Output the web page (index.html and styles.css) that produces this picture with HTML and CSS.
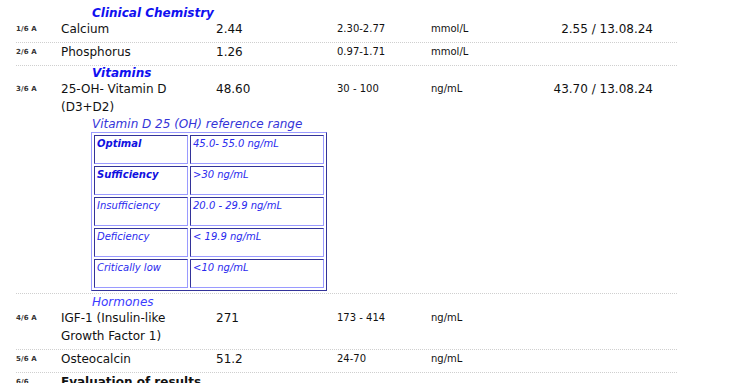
FILE: index.html
```html
<!DOCTYPE html>
<html>
<head>
<meta charset="utf-8">
<link rel="stylesheet" href="styles.css">
</head>
<body>
<div class="page">
  <div class="heading bold">Clinical Chemistry</div>
  <div class="row">
    <div class="line">
      <span class="code">1/6 A</span>
      <span class="name">Calcium</span>
      <span class="value">2.44</span>
      <span class="range">2.30-2.77</span>
      <span class="unit">mmol/L</span>
      <span class="prev">2.55 / 13.08.24</span>
    </div>
  </div>
  <div class="row">
    <div class="line">
      <span class="code">2/6 A</span>
      <span class="name">Phosphorus</span>
      <span class="value">1.26</span>
      <span class="range">0.97-1.71</span>
      <span class="unit">mmol/L</span>
      <span class="prev"></span>
    </div>
  </div>
  <div class="heading bold">Vitamins</div>
  <div class="row tight">
    <div class="line">
      <span class="code">3/6 A</span>
      <span class="name">25-OH- Vitamin D (D3+D2)</span>
      <span class="value">48.60</span>
      <span class="range">30 - 100</span>
      <span class="unit">ng/mL</span>
      <span class="prev">43.70 / 13.08.24</span>
    </div>
    <div class="refbox">
      <div class="caption">Vitamin D 25 (OH) reference range</div>
      <table class="reftable">
        <tr><td class="c1 strong">Optimal</td><td class="c2">45.0- 55.0 ng/mL</td></tr>
        <tr><td class="c1 strong">Sufficiency</td><td class="c2">&gt;30 ng/mL</td></tr>
        <tr><td class="c1">Insufficiency</td><td class="c2">20.0 - 29.9 ng/mL</td></tr>
        <tr><td class="c1">Deficiency</td><td class="c2">&lt; 19.9 ng/mL</td></tr>
        <tr><td class="c1">Critically low</td><td class="c2">&lt;10 ng/mL</td></tr>
      </table>
    </div>
  </div>
  <div class="heading light">Hormones</div>
  <div class="row">
    <div class="line">
      <span class="code">4/6 A</span>
      <span class="name">IGF-1 (Insulin-like Growth Factor 1)</span>
      <span class="value">271</span>
      <span class="range">173 - 414</span>
      <span class="unit">ng/mL</span>
      <span class="prev"></span>
    </div>
  </div>
  <div class="row">
    <div class="line">
      <span class="code">5/6 A</span>
      <span class="name">Osteocalcin</span>
      <span class="value">51.2</span>
      <span class="range">24-70</span>
      <span class="unit">ng/mL</span>
      <span class="prev"></span>
    </div>
  </div>
  <div class="row plain">
    <div class="line">
      <span class="code">6/6</span>
      <span class="name eval">Evaluation of results</span>
    </div>
  </div>
</div>
</body>
</html>
```

FILE: styles.css
```css
html, body {
  margin: 0;
  padding: 0;
  background: #ffffff;
}
body {
  font-family: "DejaVu Sans", Verdana, sans-serif;
  color: #111111;
  overflow: hidden;
}
.page {
  width: 661px;
  margin-left: 16px;
  padding-top: 6px;
}
.heading {
  padding-left: 76px;
  font-size: 12px;
  line-height: 14px;
  font-style: italic;
}
.heading.bold {
  font-weight: bold;
  color: #1010f0;
}
.heading.light {
  color: #3b3bff;
  margin-top: 1px;
}
.row {
  border-bottom: 1px dotted #cfcfcf;
  padding-bottom: 4px;
}
.row.tight {
  padding-bottom: 2px;
}
.row.plain {
  border-bottom: none;
}
.line {
  display: grid;
  grid-template-columns: 45px 155px 121px 94px 1fr 180px 24px;
  align-items: start;
  line-height: 18px;
}
.code {
  font-size: 7px;
  color: #333333;
  font-weight: bold;
  letter-spacing: 0.1px;
}
.name {
  font-size: 12px;
  padding-right: 4px;
}
.name.eval {
  font-weight: bold;
  grid-column: 2 / 5;
}
.value {
  font-size: 12px;
}
.range, .unit {
  font-size: 10px;
}
.prev {
  font-size: 12px;
  text-align: right;
}
.refbox {
  margin-left: 75px;
}
.caption {
  font-size: 12px;
  line-height: 16px;
  font-style: italic;
  color: #3535d8;
  padding-left: 1px;
}
.reftable {
  border-collapse: separate;
  border-spacing: 2px;
  border: 1px solid;
  border-color: #9a9aff #333399 #333399 #9a9aff;
}
.reftable td {
  box-sizing: border-box;
  height: 29px;
  vertical-align: top;
  padding: 2px 2px 0 2px;
  border: 1px solid;
  border-color: #333399 #9a9aff #9a9aff #333399;
  font-size: 10px;
  line-height: 12px;
  font-style: italic;
  color: #2a2aee;
}
.reftable td.c1 {
  width: 94px;
}
.reftable td.c2 {
  width: 134px;
}
.reftable td.strong {
  font-weight: bold;
  color: #1010e0;
}
```
